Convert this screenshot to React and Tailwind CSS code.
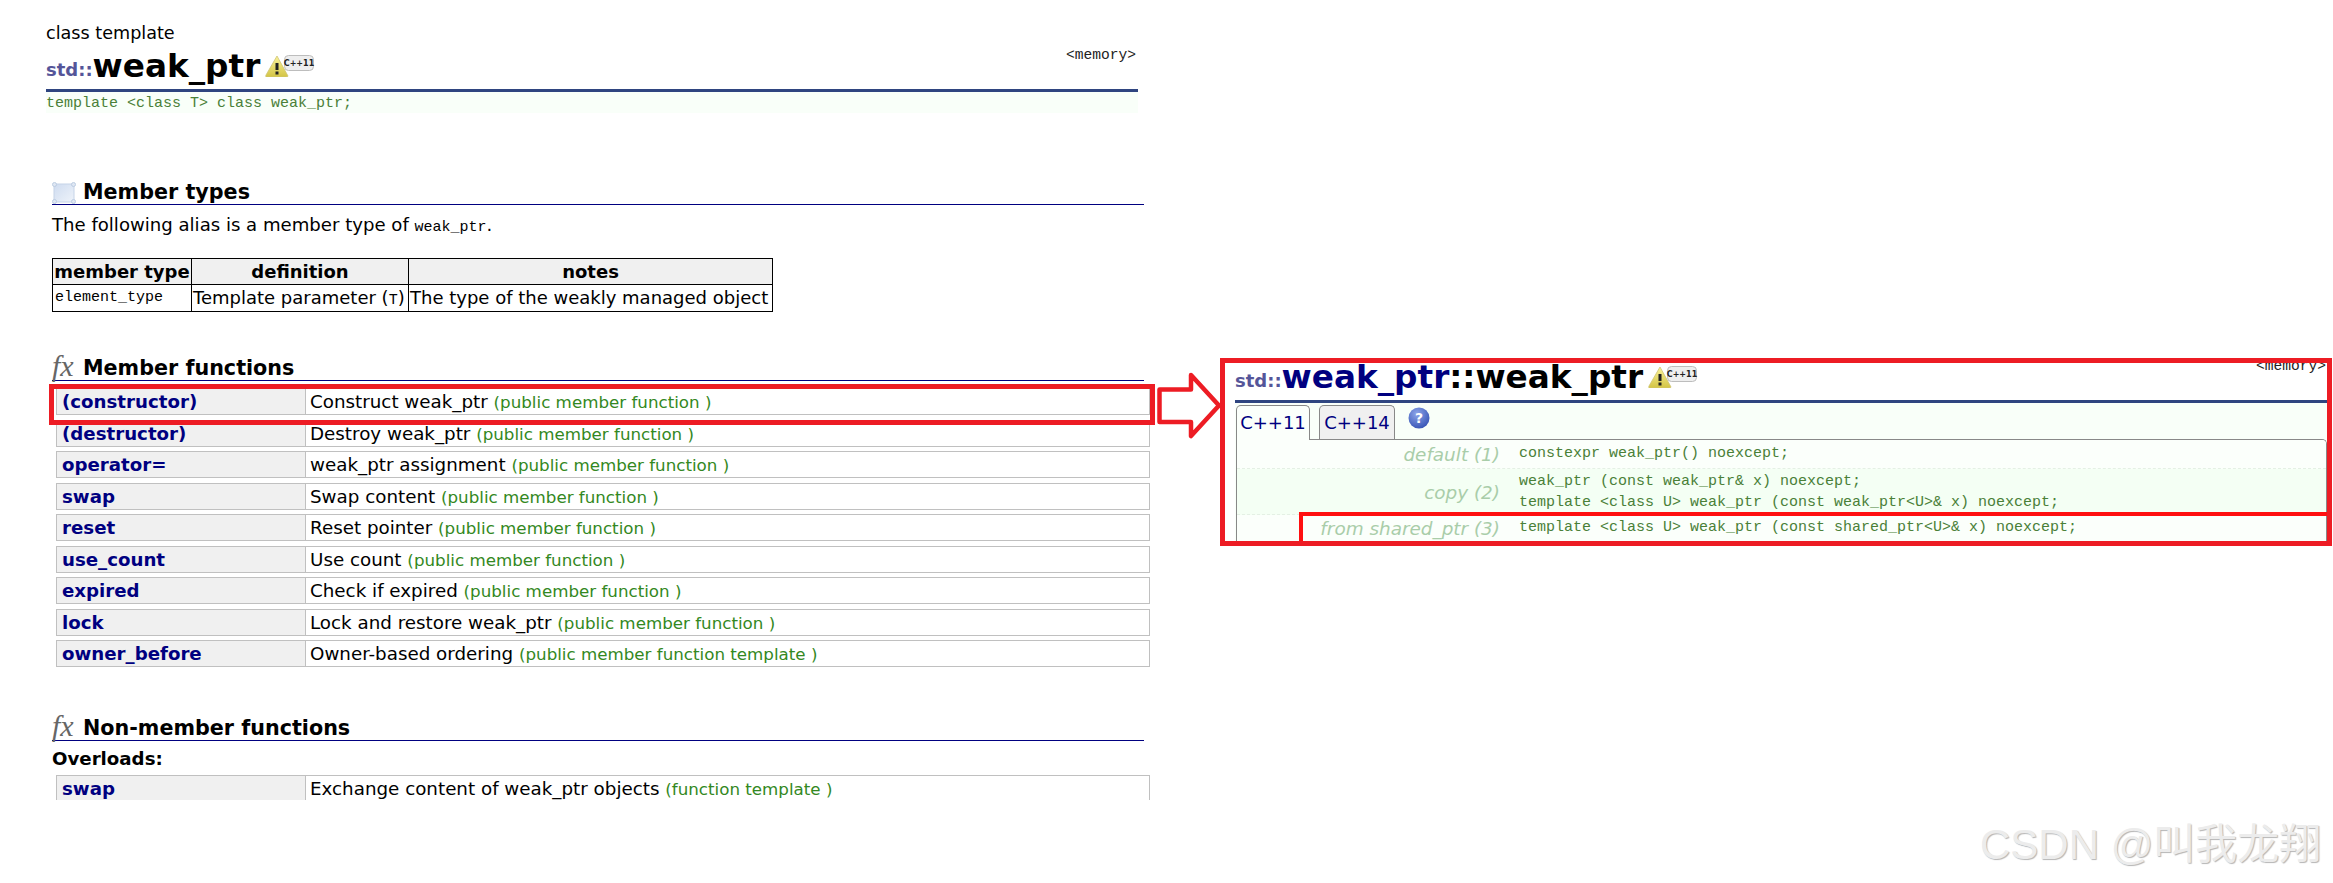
const SANS = "font-['DejaVu_Sans',Verdana,sans-serif]";
const MONO = "font-['Liberation_Mono',monospace]";

const members = [
  ["(constructor)", "Construct weak_ptr", "public member function"],
  ["(destructor)", "Destroy weak_ptr", "public member function"],
  ["operator=", "weak_ptr assignment", "public member function"],
  ["swap", "Swap content", "public member function"],
  ["reset", "Reset pointer", "public member function"],
  ["use_count", "Use count", "public member function"],
  ["expired", "Check if expired", "public member function"],
  ["lock", "Lock and restore weak_ptr", "public member function"],
  ["owner_before", "Owner-based ordering", "public member function template"],
];

function CppBadge({ id }) {
  return (
    <svg width="50" height="22" viewBox="0 0 50 22" className="ml-[5px] shrink-0">
      <defs>
        <linearGradient id={id} x1="0" y1="0" x2="0" y2="1">
          <stop offset="0" stopColor="#fbf39a" />
          <stop offset="1" stopColor="#d3c445" />
        </linearGradient>
      </defs>
      <path d="M12 1 L23 21 Q23 22 21 22 L2 22 Q0 22 1 20 Z" fill={`url(#${id})`} stroke="#cfc474" strokeWidth="0.8" />
      <rect x="10.5" y="8" width="3" height="7" fill="#222" />
      <rect x="10.5" y="16.5" width="3" height="3" fill="#222" />
      <rect x="19.5" y="0.5" width="29" height="15" rx="4" fill="#eeeeee" stroke="#bdbdbd" />
      <text x="34" y="11" textAnchor="middle" fontFamily="DejaVu Sans" fontWeight="700" fontSize="8" fill="#222">C++11</text>
    </svg>
  );
}

function SectionIcon() {
  return (
    <svg width="24" height="22" viewBox="0 0 24 22" className="shrink-0">
      <defs>
        <linearGradient id="typesFill" x1="0" y1="0" x2="1" y2="1">
          <stop offset="0" stopColor="#cfdcf0" />
          <stop offset="1" stopColor="#eef3fa" />
        </linearGradient>
      </defs>
      <rect x="2" y="2" width="20" height="18" fill="url(#typesFill)" stroke="#c6d4e8" />
      <circle cx="2.5" cy="2.5" r="2" fill="#dfe7f3" stroke="#bccce2" />
      <circle cx="21.5" cy="2.5" r="2" fill="#dfe7f3" stroke="#bccce2" />
      <circle cx="2.5" cy="19.5" r="2" fill="#dfe7f3" stroke="#bccce2" />
      <circle cx="21.5" cy="19.5" r="2" fill="#dfe7f3" stroke="#bccce2" />
    </svg>
  );
}

function SectionHead({ icon, title, className }) {
  return (
    <div className={`flex items-end ml-[6px] w-[1092px] h-[25px] border-b border-[#000080] ${className}`}>
      <div className="w-[31px] h-[24px] flex items-end">
        {icon === "fx" ? (
          <span className="font-['Liberation_Serif',serif] italic text-[30px] leading-[20px] mb-[4px] text-[#666]">fx</span>
        ) : (
          <SectionIcon />
        )}
      </div>
      <span className="text-[20.7px] leading-[24px] font-bold text-black">{title}</span>
    </div>
  );
}

function MemberRow({ name, desc, kind }) {
  return (
    <div className="flex h-[27px] ml-[10px] w-[1094px] border border-[#c0c0c0] leading-[25px]">
      <div className="w-[249px] shrink-0 bg-[#f0f0f0] border-r border-[#c0c0c0] pl-[5px] text-[18.2px] font-bold text-[#000080]">{name}</div>
      <div className="pl-[4px] text-[18.3px] text-black whitespace-nowrap">
        {desc} <span className="text-[#338822] text-[16.7px] leading-none">({kind} )</span>
      </div>
    </div>
  );
}

export default function App() {
  return (
    <div className={`relative flex w-[2333px] h-[883px] bg-white overflow-hidden ${SANS}`}>
      {/* left: class reference page */}
      <div className="w-[1220px] h-[800px] shrink-0 overflow-hidden pl-[46px] pt-[22px]">
        <div className="text-[17.6px] leading-[22px] text-black">class template</div>
        <div className="flex items-start w-[1092px] h-[45px] border-b-0">
          <div className="flex items-start flex-1 h-[45px]">
            <span className="text-[18px] leading-[45px] font-bold text-[#555599] pt-[3px]">std::</span>
            <span className="text-[32.7px] leading-[45px] font-bold text-black">weak_ptr</span>
            <div className="mt-[11px]"><CppBadge id="warnA" /></div>
          </div>
          <span className={`${MONO} text-[14.6px] leading-[20px] mt-px mr-[2px] text-[#222]`}>&lt;memory&gt;</span>
        </div>
        <div className="w-[1092px] h-[3px] bg-[#2f4580]" />
        <div className={`w-[1092px] h-[21px] bg-[#f9fff9] pt-px ${MONO} text-[15px] leading-[21px] text-[#4a8038]`}>
          template &lt;class T&gt; class weak_ptr;
        </div>

        <SectionHead icon="types" title="Member types" className="mt-[67px]" />
        <div className="ml-[6px] mt-[9px] text-[18.1px] leading-[22px] text-black">
          The following alias is a member type of <span className={`${MONO} text-[15px] leading-none`}>weak_ptr</span>.
        </div>
        <table className="ml-[6px] mt-[22px] w-[720px] table-fixed border-collapse text-[18px] text-black">
          <colgroup>
            <col className="w-[139px]" />
            <col className="w-[217px]" />
            <col className="w-[364px]" />
          </colgroup>
          <thead>
            <tr className="h-[26px] bg-[#f0f0f0]">
              <th className="border border-black font-bold leading-[24px] p-0 whitespace-nowrap">member type</th>
              <th className="border border-black font-bold leading-[24px] p-0">definition</th>
              <th className="border border-black font-bold leading-[24px] p-0">notes</th>
            </tr>
          </thead>
          <tbody>
            <tr className="h-[27px]">
              <td className={`border border-black px-[2px] py-0 ${MONO} text-[15px] leading-[24px] whitespace-nowrap`}>element_type</td>
              <td className="border border-black px-px py-0 leading-[24px] whitespace-nowrap">
                Template parameter (<span className={`${MONO} text-[15px] leading-none`}>T</span>)
              </td>
              <td className="border border-black px-[1px] py-0 leading-[24px] whitespace-nowrap">The type of the weakly managed object</td>
            </tr>
          </tbody>
        </table>

        <SectionHead icon="fx" title="Member functions" className="mt-[44px]" />
        <div className="flex flex-col gap-[4.5px] mt-[7px]">
          {members.map((m) => (
            <MemberRow key={m[0]} name={m[0]} desc={m[1]} kind={m[2]} />
          ))}
        </div>

        <SectionHead icon="fx" title="Non-member functions" className="mt-[49px]" />
        <div className="ml-[6px] mt-[7px] text-[18.2px] leading-[22px] font-bold text-black">Overloads:</div>
        <div className="mt-[5px]">
          <MemberRow name="swap" desc="Exchange content of weak_ptr objects" kind="function template" />
        </div>
      </div>

      {/* right: constructor panel */}
      <div className="relative w-[1112px] h-[188px] mt-[358px] shrink-0 border-[5px] border-[#ed1c24] overflow-hidden pl-[10px]">
        <div className="flex items-start h-[37px]">
          <div className="flex items-start flex-1 -mt-[4px]">
            <span className="text-[18px] leading-[37px] font-bold text-[#555599] pt-[3px]">std::</span>
            <span className="text-[32.7px] leading-[37px] font-bold whitespace-nowrap">
              <span className="text-[#000080]">weak_ptr</span>
              <span className="text-black">::weak_ptr</span>
            </span>
            <div className="mt-[7px]"><CppBadge id="warnB" /></div>
          </div>
          <span className={`${MONO} text-[14.6px] leading-[20px] mt-[-7px] mr-px text-[#222]`}>&lt;memory&gt;</span>
        </div>
        <div className="h-[3px] bg-[#2f4580]" />
        <div className="bg-[#f9fff9] h-[138px]">
          <div className="flex items-start h-[36px] pt-[2px] pl-px">
            <div className="w-[74px] h-[35px] bg-[#fbfffb] border border-b-0 border-[#888] rounded-t-[5px] text-[#000080] text-[18px] leading-[34px] text-center relative z-10">C++11</div>
            <div className="w-[76px] h-[34px] ml-[9px] bg-[#f0f0f0] border border-b-0 border-[#888] rounded-t-[5px] text-[#000080] text-[18px] leading-[33px] text-center">C++14</div>
            <svg width="22" height="22" viewBox="0 0 22 22" className="ml-[13px] mt-[2px]">
              <defs>
                <radialGradient id="helpFill" cx="0.4" cy="0.3" r="0.8">
                  <stop offset="0" stopColor="#8ea6ea" />
                  <stop offset="1" stopColor="#2f4cb0" />
                </radialGradient>
              </defs>
              <circle cx="11" cy="11" r="10.5" fill="url(#helpFill)" />
              <text x="11" y="16" textAnchor="middle" fontFamily="DejaVu Sans" fontWeight="700" fontSize="14" fill="#fff">?</text>
            </svg>
          </div>
          <div className="ml-px h-[102px] border-t border-x border-[#888] rounded-tr-[5px] overflow-hidden">
            <div className="flex h-[29px] border-b border-dashed border-[#e4f0e4] bg-[#fbfffb] items-center">
              <div className="w-[263px] pt-[2px] text-right italic text-[18.4px] text-[#a9cda9]">default (1)</div>
              <div className={`ml-[19px] ${MONO} text-[15px] text-[#4a8038]`}>constexpr weak_ptr() noexcept;</div>
            </div>
            <div className="flex h-[46px] border-b border-dashed border-[#e4f0e4] bg-[#f4fff4] items-center">
              <div className="w-[263px] pt-[2px] text-right italic text-[18.4px] text-[#a9cda9]">copy (2)</div>
              <div className={`ml-[19px] ${MONO} text-[15px] text-[#4a8038] leading-[21px]`}>
                <div>weak_ptr (const weak_ptr&amp; x) noexcept;</div>
                <div>template &lt;class U&gt; weak_ptr (const weak_ptr&lt;U&gt;&amp; x) noexcept;</div>
              </div>
            </div>
            <div className="flex h-[27px] bg-[#fbfffb] items-center">
              <div className="w-[263px] text-right italic text-[18.4px] text-[#a9cda9] whitespace-nowrap">from shared_ptr (3)</div>
              <div className={`ml-[19px] ${MONO} text-[15px] text-[#4a8038]`}>template &lt;class U&gt; weak_ptr (const shared_ptr&lt;U&gt;&amp; x) noexcept;</div>
            </div>
          </div>
        </div>
        {/* highlight on overload 3 */}
        <div className="absolute left-[74px] top-[149px] right-0 bottom-0 border-t-4 border-l-4 border-[#ff1010]" />
      </div>

      {/* highlight on the constructor row */}
      <div className="absolute left-[49px] top-[384px] w-[1106px] h-[41px] border-[5px] border-[#ed1c24]" />

      {/* arrow between the two */}
      <svg className="absolute left-[1150px] top-[365px]" width="76" height="80" viewBox="0 0 76 80">
        <path d="M9.5 24.5 H41 V10 L69 40.5 L41 71 V57 H9.5 Z" fill="none" stroke="#ed1c24" strokeWidth="4.5" strokeLinejoin="round" />
      </svg>

      {/* watermark */}
      <div className="absolute left-[1980px] top-[818px] font-['Liberation_Sans','Noto_Sans_CJK_SC',sans-serif] text-[42px] leading-[54px] whitespace-nowrap text-[#ececec] [text-shadow:1px_1px_1px_#b5b5b5]">
        CSDN @叫我龙翔
      </div>
    </div>
  );
}
